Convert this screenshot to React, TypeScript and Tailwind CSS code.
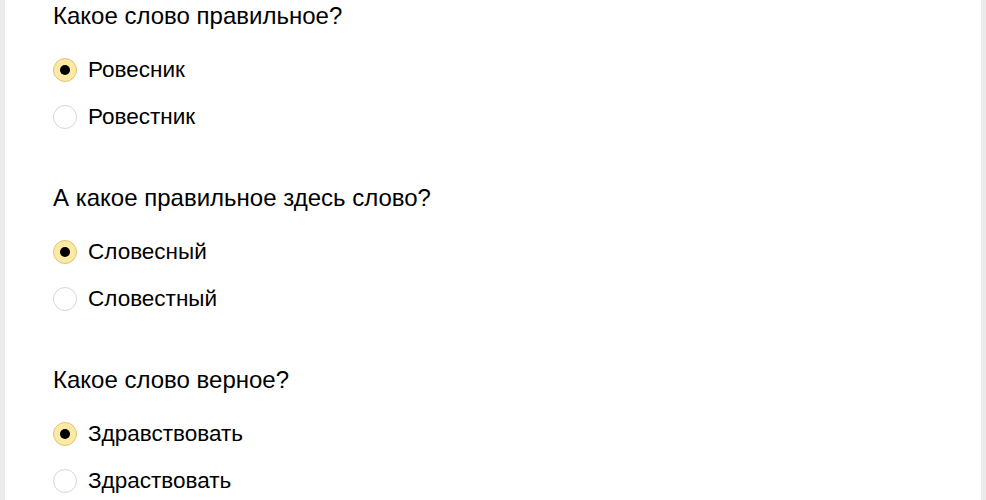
import React from "react";

type Q = { question: string; options: string[]; selected: number };

const data: Q[] = [
  { question: "Какое слово правильное?", options: ["Ровесник", "Ровестник"], selected: 0 },
  { question: "А какое правильное здесь слово?", options: ["Словесный", "Словестный"], selected: 0 },
  { question: "Какое слово верное?", options: ["Здравствовать", "Здраствовать"], selected: 0 },
];

function Radio({ checked }: { checked: boolean }) {
  return checked ? (
    <span className="flex h-[24px] w-[24px] shrink-0 items-center justify-center rounded-full border border-[#e0c470] bg-[#fde9a6]">
      <span className="h-[10px] w-[10px] rounded-full bg-black" />
    </span>
  ) : (
    <span className="h-[24px] w-[24px] shrink-0 rounded-full border border-[#d6d6d6] bg-white" />
  );
}

export default function App() {
  return (
    <div className="h-[500px] w-full overflow-hidden bg-[#ebebeb] px-[5px]" style={{ fontFamily: '"Liberation Sans", Arial, sans-serif' }}>
      <div className="h-full bg-white pl-[48px] pt-[4px] leading-[24px] text-black">
        {data.map((q, i) => (
          <div key={i} className="mb-[46px]">
            <div className="h-[24px] text-[24px]">{q.question}</div>
            <div className="mt-[18px] text-[22.5px]">
              {q.options.map((o, j) => (
                <div key={j} className="flex h-[47px] items-center gap-[11px]">
                  <Radio checked={j === q.selected} />
                  <span>{o}</span>
                </div>
              ))}
            </div>
          </div>
        ))}
      </div>
    </div>
  );
}
